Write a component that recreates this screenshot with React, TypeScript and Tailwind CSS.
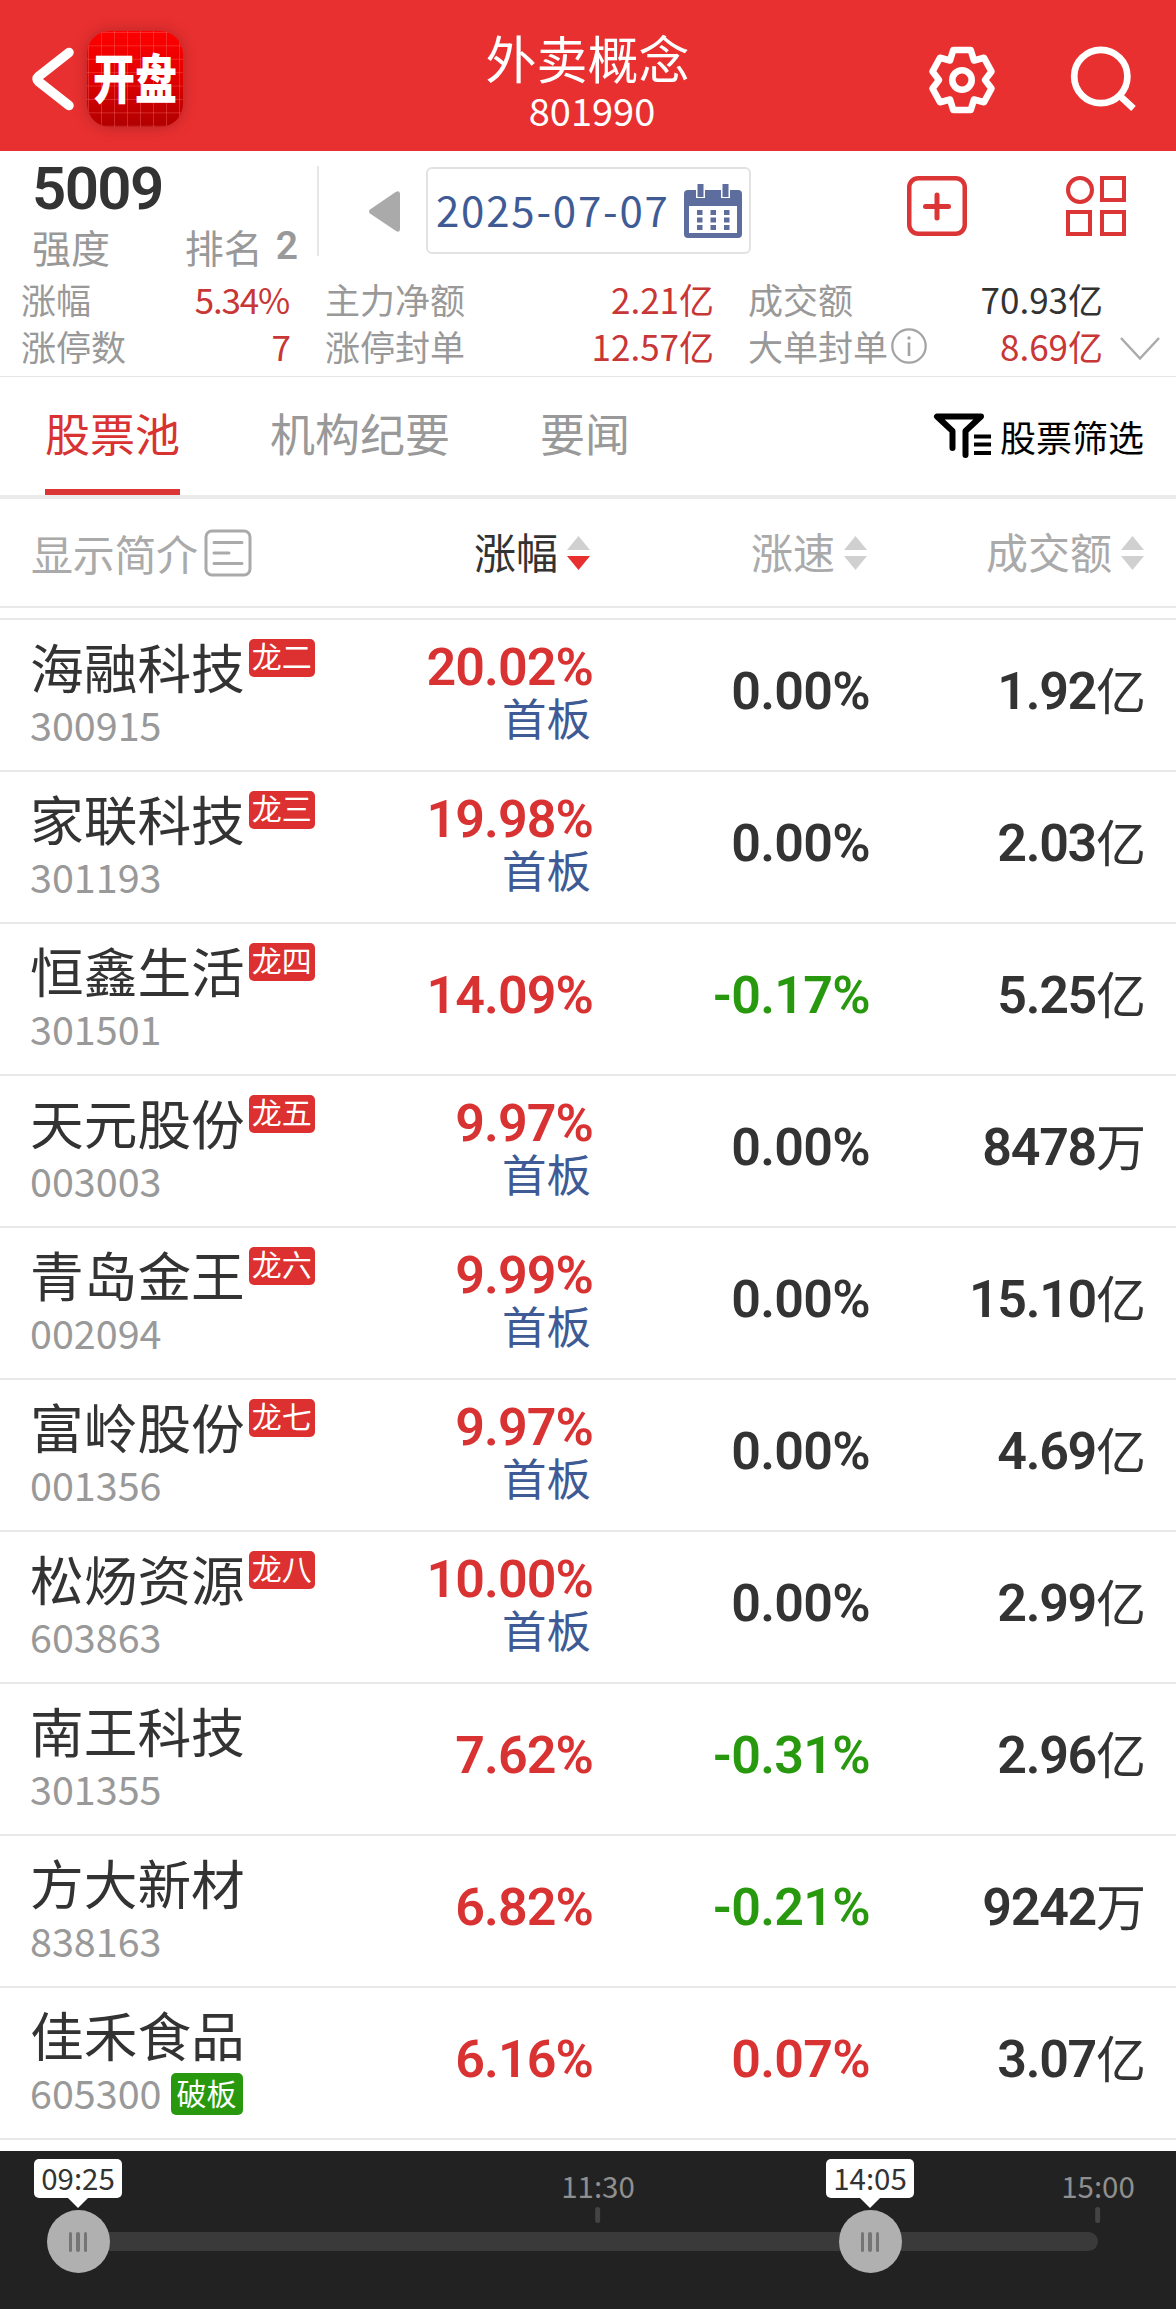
import React, { useState } from "react";
import clsx from "clsx";

interface Stock {
  name: string;
  code: string;
  badge?: string;
  broken?: boolean;
  change: string;
  board?: string;
  speed: string;
  amount: string;
  unit: string;
}

const STOCKS: Stock[] = [
  { name: "海融科技", code: "300915", badge: "龙二", change: "20.02%", board: "首板", speed: "0.00%", amount: "1.92", unit: "亿" },
  { name: "家联科技", code: "301193", badge: "龙三", change: "19.98%", board: "首板", speed: "0.00%", amount: "2.03", unit: "亿" },
  { name: "恒鑫生活", code: "301501", badge: "龙四", change: "14.09%", speed: "-0.17%", amount: "5.25", unit: "亿" },
  { name: "天元股份", code: "003003", badge: "龙五", change: "9.97%", board: "首板", speed: "0.00%", amount: "8478", unit: "万" },
  { name: "青岛金王", code: "002094", badge: "龙六", change: "9.99%", board: "首板", speed: "0.00%", amount: "15.10", unit: "亿" },
  { name: "富岭股份", code: "001356", badge: "龙七", change: "9.97%", board: "首板", speed: "0.00%", amount: "4.69", unit: "亿" },
  { name: "松炀资源", code: "603863", badge: "龙八", change: "10.00%", board: "首板", speed: "0.00%", amount: "2.99", unit: "亿" },
  { name: "南王科技", code: "301355", change: "7.62%", speed: "-0.31%", amount: "2.96", unit: "亿" },
  { name: "方大新材", code: "838163", change: "6.82%", speed: "-0.21%", amount: "9242", unit: "万" },
  { name: "佳禾食品", code: "605300", broken: true, change: "6.16%", speed: "0.07%", amount: "3.07", unit: "亿" },
];

const TABS = ["股票池", "机构纪要", "要闻"];

const numberFont = "font-['Roboto','Noto_Sans_CJK_SC',sans-serif]";

const speedColor = (value: string) => {
  if (value.startsWith("-")) return "text-[#28990f]";
  return parseFloat(value) > 0 ? "text-[#d93232]" : "text-[#333333]";
};

const BackIcon = () => (
  <svg className="h-[64px] w-[44px]" viewBox="0 0 44 64" fill="none">
    <path d="M38 5.500L7.500 29.500Q4.500 32 7.500 34.500L38 58.500" stroke="#fff" strokeWidth="9.500" strokeLinecap="round" />
  </svg>
);

const GearIcon = () => (
  <svg className="h-[68px] w-[68px]" viewBox="0 0 68 68" fill="none" stroke="#fff" strokeWidth="6.600" strokeLinejoin="round">
    <path d="M25.300 4H42.700L46 14.500L56 11.800L63.500 25.500L57 34L63.500 42.500L56 56.200L46 53.500L42.700 64H25.300L22 53.500L12 56.200L4.500 42.500L11 34L4.500 25.500L12 11.800L22 14.500Z" />
    <circle cx="34" cy="34" r="9.700" />
  </svg>
);

const SearchIcon = () => (
  <svg className="h-[68px] w-[68px]" viewBox="0 0 68 68" fill="none" stroke="#fff" strokeWidth="6.700">
    <circle cx="30.800" cy="30.500" r="26.600" />
    <path d="M49.500 49.500L63.500 62.500" />
  </svg>
);

const CalendarIcon = () => (
  <svg className="h-[54px] w-[58px]" viewBox="0 0 58 54">
    <rect x="0" y="6" width="58" height="48" rx="4" fill="#5d6d9e" />
    <rect x="5" y="22" width="48" height="27" fill="#fff" />
    <path d="M12 0H21V14H12ZM37 0H46V14H37Z" fill="#fff" />
    <path d="M13.500 0H19.500V13H13.500ZM38.500 0H44.500V13H38.500Z" fill="#5d6d9e" />
    {[26, 33.5, 41].map((y) =>
      [13, 26.5, 40].map((x) => <rect key={`${x}-${y}`} x={x} y={y} width="5.500" height="5" fill="#5d6d9e" />)
    )}
  </svg>
);

const PlusIcon = () => (
  <svg className="h-[60px] w-[60px]" viewBox="0 0 60 60" fill="none" stroke="#dc3535">
    <rect x="2.250" y="2.250" width="55.500" height="55.500" rx="9" strokeWidth="4.500" />
    <path d="M18.500 30.500H41.500M30 19V42" strokeWidth="5" strokeLinecap="round" />
  </svg>
);

const GridIcon = () => (
  <svg className="h-[60px] w-[60px]" viewBox="0 0 60 60" fill="none" stroke="#dc3535" strokeWidth="4">
    <circle cx="14" cy="14" r="12" />
    <rect x="36" y="2" width="22" height="22" />
    <rect x="2" y="36" width="22" height="22" />
    <rect x="36" y="36" width="22" height="22" />
  </svg>
);

const FilterIcon = () => (
  <svg className="h-[46px] w-[58px]" viewBox="0 0 58 46" fill="none" stroke="#000" strokeWidth="6">
    <path d="M19.500 35V18L4 3.500H48L32.500 18V42" strokeLinecap="round" strokeLinejoin="round" />
    <path d="M41 23.500H58M41 31.500H58M41 40H58" strokeWidth="4" />
  </svg>
);

const SortIcon = ({ active = false }: { active?: boolean }) => (
  <svg className="h-[34px] w-[23px]" viewBox="0 0 23 34">
    <path d="M11.500 0L23 14H0Z" fill="#d0d0d0" />
    <path d="M11.500 34L23 20H0Z" fill={active ? "#e83030" : "#d0d0d0"} />
  </svg>
);

const AppLogo = () => (
  <div className="h-24 w-24 rounded-[23px] bg-linear-to-b from-[#ff0000] via-[#e00000] to-[#b00000] shadow-[0_0_14px_rgba(110,20,20,0.4)]">
    <div className="flex h-full w-full items-center justify-center rounded-[23px] bg-[linear-gradient(to_right,rgba(255,120,120,0.35)_1px,transparent_1px),linear-gradient(to_bottom,rgba(255,120,120,0.35)_1px,transparent_1px)] bg-[size:13px_13.400px] bg-[position:1px_1px]">
      <span className="block -translate-y-[3px] scale-y-[1.27] text-[42px] leading-none font-black whitespace-nowrap text-white">开盘</span>
    </div>
  </div>
);

const StatLabel = ({ children }: { children: React.ReactNode }) => (
  <span className="text-[35px] whitespace-nowrap text-[#999999]">{children}</span>
);

const StatValue = ({ dark = false, tight = false, children }: { dark?: boolean; tight?: boolean; children: React.ReactNode }) => (
  <span
    className={clsx(
      "text-[35px] whitespace-nowrap",
      dark ? "text-[#333333]" : "text-[#c93636]",
      tight && "mr-[2px] tracking-[-1.200px]"
    )}
  >
    {children}
  </span>
);

const StockRow = ({ stock }: { stock: Stock }) => (
  <div className="flex h-[152px] border-b-2 border-[#e9e9e9] pl-[30px]">
    <div className="w-[330px] pt-[16px]">
      <div className="flex h-[60px] items-start">
        <span className="text-[53.700px] leading-[60px] text-[#333333]">{stock.name}</span>
        {stock.badge && (
          <span className="mt-[3px] ml-[4px] h-[38px] w-[66px] rounded-[5px] bg-[#dd3030] text-center text-[30px] leading-[33px] text-white">
            {stock.badge}
          </span>
        )}
      </div>
      <div className="mt-[4px] flex h-[48px] items-start">
        <span className="text-[39.500px] leading-[48px] text-[#999999]">{stock.code}</span>
        {stock.broken && (
          <span className="mt-[5px] ml-[9px] h-[42px] w-[72px] rounded-[5px] bg-[#28990f] text-center text-[30px] leading-[38px] text-white">
            破板
          </span>
        )}
      </div>
    </div>
    <div className="flex w-[233px] flex-col items-end justify-center pb-[6px]">
      <span className={clsx(numberFont, "text-[52px] leading-[52px] font-semibold tracking-[-0.900px] text-[#d93232]")}>
        {stock.change}
      </span>
      {stock.board && <span className="-mt-[2px] mr-[2px] text-[44.500px] leading-[50px] text-[#3f5b96]">{stock.board}</span>}
    </div>
    <div className="flex w-[277px] items-center justify-end pb-[6px]">
      <span className={clsx(numberFont, "text-[52px] leading-[52px] font-semibold tracking-[-0.700px]", speedColor(stock.speed))}>
        {stock.speed}
      </span>
    </div>
    <div className="flex w-[276px] items-center justify-end pb-[6px] text-[#333333]">
      <span className={clsx(numberFont, "text-[52px] leading-[52px] font-semibold tracking-[-1.300px]")}>{stock.amount}</span>
      <span className="pb-[9px] text-[50px] leading-[52px]">{stock.unit}</span>
    </div>
  </div>
);

const Knob = ({ left, time }: { left: string; time: string }) => (
  <div className={clsx("absolute top-[8px] flex w-[88px] -translate-x-1/2 flex-col items-center", left)}>
    <span className="h-[39px] w-[88px] rounded-[5px] bg-white text-center text-[29.500px] leading-[37px] text-[#333333]">{time}</span>
    <span className="h-0 w-0 border-x-[10px] border-t-[10px] border-x-transparent border-t-white" />
    <div className="mt-[2px] flex h-[63px] w-[63px] items-center justify-center gap-[4px] rounded-full bg-[#b0b0b0]">
      <i className="h-[20px] w-[3.500px] rounded-full bg-[#757575]" />
      <i className="h-[20px] w-[3.500px] rounded-full bg-[#757575]" />
      <i className="h-[20px] w-[3.500px] rounded-full bg-[#757575]" />
    </div>
  </div>
);

const Tick = ({ left, time }: { left: string; time: string }) => (
  <div className={clsx("absolute top-[16px] flex -translate-x-1/2 flex-col items-center", left)}>
    <span className="h-[40px] text-[29.500px] leading-[37px] text-[#8f8f8f]">{time}</span>
    <span className="h-[16px] w-[5px] rounded-sm bg-[#444444]" />
  </div>
);

const App: React.FC = () => {
  const [activeTab, setActiveTab] = useState(0);

  return (
    <div className="flex h-[2309px] w-[1176px] flex-col overflow-hidden bg-white font-['Noto_Sans_CJK_SC',sans-serif]">
      <header className="flex h-[151px] items-center justify-between bg-[#e83030] pr-[38px] pl-[31px] text-white">
        <div className="flex w-[343px] items-center gap-[12px] pt-[7px]">
          <BackIcon />
          <AppLogo />
        </div>
        <div className="flex flex-col items-center pt-[9px]">
          <h1 className="text-[51px] leading-[60px]">外卖概念</h1>
          <span className="pl-[9px] text-[38px] leading-[46px]">801990</span>
        </div>
        <div className="flex w-[337px] items-center justify-end gap-[74px] pt-[8px]">
          <GearIcon />
          <SearchIcon />
        </div>
      </header>

      <section className="h-[226px] border-b border-[#e6e6e6] pt-[15px]">
        <div className="flex h-[109px]">
          <div className="w-[298px] pl-[32px]">
            <div className={clsx(numberFont, "text-[60px] leading-[45px] font-semibold tracking-[-1.600px] text-[#333333]")}>5009</div>
            <div className="mt-[11px] flex items-center justify-between text-[39px] leading-[48px] text-[#999999]">
              <span>强度</span>
              <span className="flex items-center">
                排名<b className={clsx(numberFont, "ml-[13px] font-semibold")}>2</b>
              </span>
            </div>
          </div>
          <div className="ml-[19px] h-[90px] w-[2px] bg-[#e6e6e6]" />
          <svg className="mt-[25px] ml-[50px] h-[41px] w-[31px]" viewBox="0 0 31 41">
            <path d="M1 18.500L27 .800Q31 -1 31 3V38Q31 42 27 40L1 22.500Q-1 20.500 1 18.500Z" fill="#aaaaaa" />
          </svg>
          <div className="mt-px ml-[26px] flex h-[87px] w-[325px] items-center justify-between rounded-[6px] border-2 border-[#e2e2e2] pr-[7px] pl-[8px]">
            <span className="pb-[4px] text-[42px] leading-[60px] tracking-[1.800px] text-[#3f5b96]">2025-07-07</span>
            <CalendarIcon />
          </div>
          <div className="mt-[10px] ml-[156px]">
            <PlusIcon />
          </div>
          <div className="mt-[10px] ml-[99px]">
            <GridIcon />
          </div>
        </div>
        <div className="flex pl-[21px] leading-[47px]">
          <div className="w-[270px]">
            <div className="flex justify-between">
              <StatLabel>涨幅</StatLabel>
              <StatValue tight>5.34%</StatValue>
            </div>
            <div className="flex justify-between">
              <StatLabel>涨停数</StatLabel>
              <StatValue>7</StatValue>
            </div>
          </div>
          <div className="ml-[34px] w-[389px]">
            <div className="flex justify-between">
              <StatLabel>主力净额</StatLabel>
              <StatValue>2.21亿</StatValue>
            </div>
            <div className="flex justify-between">
              <StatLabel>涨停封单</StatLabel>
              <StatValue>12.57亿</StatValue>
            </div>
          </div>
          <div className="ml-[34px] w-[355px]">
            <div className="flex justify-between">
              <StatLabel>成交额</StatLabel>
              <StatValue dark>70.93亿</StatValue>
            </div>
            <div className="flex items-center justify-between">
              <div className="flex items-center gap-[3px]">
                <StatLabel>大单封单</StatLabel>
                <svg className="h-[36px] w-[36px]" viewBox="0 0 36 36" fill="none" stroke="#a3a3a3" strokeWidth="2.200">
                  <circle cx="18" cy="18" r="16.700" />
                  <path d="M18 14.500V28" strokeWidth="2.600" />
                  <circle cx="18" cy="10" r="1" fill="#a3a3a3" strokeWidth="1.500" />
                </svg>
              </div>
              <StatValue>8.69亿</StatValue>
            </div>
          </div>
          <svg className="mt-[61px] ml-[17px] h-[26px] w-[40px]" viewBox="0 0 40 26" fill="none" stroke="#aaaaaa" strokeWidth="2.500">
            <path d="M1 2L20 22.500L39 2" />
          </svg>
        </div>
      </section>

      <nav className="flex h-[122px] items-stretch justify-between border-b-4 border-[#ebebeb] pr-[32px] pl-[45px]">
        <div className="flex gap-[90px]">
          {TABS.map((tab, index) => (
            <button
              key={tab}
              onClick={() => setActiveTab(index)}
              className={clsx(
                "border-b-[6px] text-[45px] leading-[110px]",
                activeTab === index ? "border-[#dc3535] text-[#d93232]" : "border-transparent text-[#999999]"
              )}
            >
              {tab}
            </button>
          ))}
        </div>
        <button className="flex items-center gap-[9px] text-[36px] text-black">
          <FilterIcon />
          <span>股票筛选</span>
        </button>
      </nav>

      <div className="flex h-[109px] items-center border-b-2 border-[#e9e9e9] pl-[31px] text-[42px] leading-[60px] text-[#aaaaaa]">
        <div className="flex w-[281px] items-center gap-[6px]">
          <span className="tracking-[-0.300px]">显示简介</span>
          <svg className="h-[48px] w-[48px]" viewBox="0 0 48 48" fill="none" stroke="#aaaaaa" strokeWidth="3">
            <rect x="2" y="2" width="44" height="44" rx="6" />
            <path d="M10 13.500H38M10 24H25M10 34.500H38" strokeLinecap="round" />
          </svg>
        </div>
        <div className="flex w-[278px] items-center justify-end gap-[9px] text-[#333333]">
          <span className="pb-[3px]">涨幅</span>
          <SortIcon active />
        </div>
        <div className="flex w-[277px] items-center justify-end gap-[9px]">
          <span className="pb-[3px]">涨速</span>
          <SortIcon />
        </div>
        <div className="flex w-[277px] items-center justify-end gap-[9px]">
          <span className="pb-[3px]">成交额</span>
          <SortIcon />
        </div>
      </div>

      <main className="mt-[10px] h-[1533px] shrink-0 border-t-2 border-[#e9e9e9]">
        {STOCKS.map((stock) => (
          <StockRow key={stock.code} stock={stock} />
        ))}
      </main>

      <footer className="relative h-[158px] shrink-0 bg-[#222222] pt-[81px] pl-[77px]">
        <div className="h-[19px] w-[1021px] rounded-full bg-[#3a3a3a]" />
        <Tick left="left-[598px]" time="11:30" />
        <Tick left="left-[1098px]" time="15:00" />
        <Knob left="left-[78px]" time="09:25" />
        <Knob left="left-[870px]" time="14:05" />
      </footer>
    </div>
  );
};

export default App;
